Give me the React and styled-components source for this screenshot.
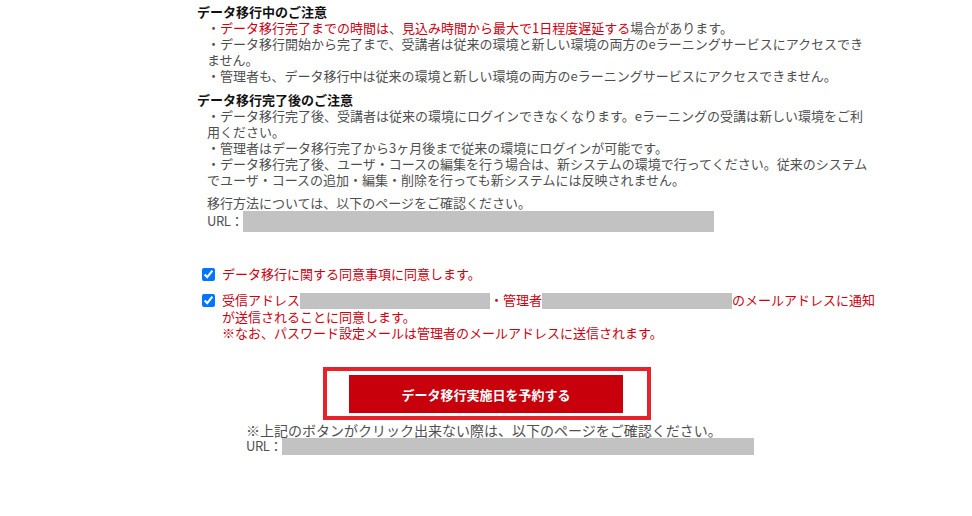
import React from "react"
import styled, { createGlobalStyle } from "styled-components"

const GlobalStyle = createGlobalStyle`
  html, body {
    margin: 0;
    padding: 0;
    background: #fff;
  }
  body {
    font-family: "Noto Sans CJK JP", "Noto Sans", sans-serif;
    font-size: 13px;
    line-height: 16px;
    color: #4f4f4f;
  }
`

const Page = styled.main`
  padding: 4px 0 40px 197px;
  width: 680px;
`

const Notice = styled.section`
  & + & {
    margin-top: 8px;
  }
`

const Heading = styled.h3`
  margin: 0;
  font-size: 13px;
  line-height: 16px;
  font-weight: 700;
  color: #111;
`

const List = styled.ul`
  list-style: none;
  margin: 0;
  padding: 0 0 0 10px;
  width: 666px;
`

const Item = styled.li`
  margin: 0;
`

const Red = styled.span`
  color: #d0000f;
`

const LinkBlock = styled.div`
  margin: ${(p) => p.$top || 0}px 0 0 ${(p) => p.$left || 0}px;
  font-size: ${(p) => p.$size || 13}px;
`

const UrlRow = styled.div`
  display: flex;
  align-items: center;
  height: ${(p) => p.$h}px;
`

const UrlLabel = styled.span`
  font-size: 13px;
  letter-spacing: -0.4px;
`

const Masked = styled.span`
  display: inline-block;
  background: #c2c2c2;
  width: ${(p) => p.$w}px;
  height: ${(p) => p.$h}px;
  vertical-align: middle;
`

const Agreements = styled.div`
  margin: 35px 0 0 5px;
  display: flex;
  flex-direction: column;
  gap: 10px;
`

const Agree = styled.label`
  display: flex;
  align-items: flex-start;
  gap: 7px;
  color: #d0000f;
`

const Check = styled.input.attrs({ type: "checkbox" })`
  margin: 2px 0 0;
  width: 13px;
  height: 13px;
  flex: none;
  accent-color: #0075ff;
`

const AgreeText = styled.span`
  width: 660px;
`

const Frame = styled.div`
  box-sizing: border-box;
  margin: 26px 0 0 126px;
  width: 328px;
  border: 4px solid #e8222a;
  padding: 4px 24px 3px 22px;
`

const Reserve = styled.button`
  display: block;
  width: 274px;
  height: 38px;
  border: 0;
  background: #c8000c;
  color: #fff;
  font-family: inherit;
  font-size: 13px;
  font-weight: 700;
  cursor: pointer;
`

export default function App() {
  return (
    <>
      <GlobalStyle />
      <Page>
        <Notice>
          <Heading>データ移行中のご注意</Heading>
          <List>
            <Item>
              ・<Red>データ移行完了までの時間は</Red>、<Red>見込み時間から最大で1日程度遅延する</Red>場合があります。
            </Item>
            <Item>
              ・データ移行開始から完了まで、受講者は従来の環境と新しい環境の両方のeラーニングサービスにアクセスできません。
            </Item>
            <Item>
              ・管理者も、データ移行中は従来の環境と新しい環境の両方のeラーニングサービスにアクセスできません。
            </Item>
          </List>
        </Notice>

        <Notice>
          <Heading>データ移行完了後のご注意</Heading>
          <List>
            <Item>
              ・データ移行完了後、受講者は従来の環境にログインできなくなります。eラーニングの受講は新しい環境をご利用ください。
            </Item>
            <Item>・管理者はデータ移行完了から3ヶ月後まで従来の環境にログインが可能です。</Item>
            <Item>
              ・データ移行完了後、ユーザ・コースの編集を行う場合は、新システムの環境で行ってください。従来のシステムでユーザ・コースの追加・編集・削除を行っても新システムには反映されません。
            </Item>
          </List>
        </Notice>

        <LinkBlock $top={7} $left={10}>
          <div>移行方法については、以下のページをご確認ください。</div>
          <UrlRow $h={20}>
            <UrlLabel>URL：</UrlLabel>
            <Masked $w={471} $h={21} />
          </UrlRow>
        </LinkBlock>

        <Agreements>
          <Agree>
            <Check defaultChecked />
            <AgreeText>データ移行に関する同意事項に同意します。</AgreeText>
          </Agree>
          <Agree>
            <Check defaultChecked />
            <AgreeText>
              受信アドレス<Masked $w={190} $h={16} />・管理者<Masked $w={190} $h={16} />のメールアドレスに通知が送信されることに同意します。
              <br />
              ※なお、パスワード設定メールは管理者のメールアドレスに送信されます。
            </AgreeText>
          </Agree>
        </Agreements>

        <Frame>
          <Reserve type="button">データ移行実施日を予約する</Reserve>
        </Frame>

        <LinkBlock $top={2} $left={49} $size={14}>
          <div>※上記のボタンがクリック出来ない際は、以下のページをご確認ください。</div>
          <UrlRow $h={16}>
            <UrlLabel>URL：</UrlLabel>
            <Masked $w={472} $h={17} />
          </UrlRow>
        </LinkBlock>
      </Page>
    </>
  )
}
